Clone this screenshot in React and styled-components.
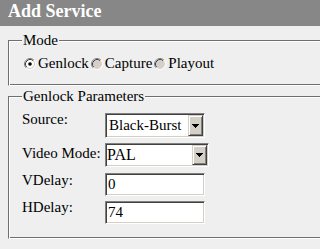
import React from 'react';
import styled, { createGlobalStyle } from 'styled-components';

const GlobalStyle = createGlobalStyle`
  html, body {
    margin: 0;
    padding: 0;
    background: #efefef;
    overflow: hidden;
  }
  body {
    font-family: "Liberation Serif", "Times New Roman", serif;
    font-size: 15px;
    color: #000;
  }
`;

const modes = [
    { name: 'Genlock', checked: true },
    { name: 'Capture', checked: false },
    { name: 'Playout', checked: false },
];

const RadioMark = ({ checked }) => (
    <svg width="12" height="12" viewBox="0 0 12 12">
        <circle cx="6" cy="6" r="4" fill={checked ? '#fff' : '#d4d0c8'} />
        <path d="M2.11 9.89 A5.5 5.5 0 0 1 9.89 2.11" fill="none" stroke="#808080" />
        <path d="M9.89 2.11 A5.5 5.5 0 0 1 2.11 9.89" fill="none" stroke="#fff" />
        <path d="M2.82 9.18 A4.5 4.5 0 0 1 9.18 2.82" fill="none" stroke="#404040" />
        <path d="M9.18 2.82 A4.5 4.5 0 0 1 2.82 9.18" fill="none" stroke="#d4d0c8" />
        {checked && <circle cx="6" cy="6" r="1.8" fill="#000" />}
    </svg>
);

const Arrow = () => (
    <svg width="7" height="4" viewBox="0 0 7 4">
        <path d="M0 0h7v1h-1v1h-1v1h-1v1h-1v-1h-1v-1h-1v-1h-1z" fill="#000" />
    </svg>
);

class App extends React.Component {

    renderRadios() {
        return modes.map((m) => (
            <RadioItem key={m.name}>
                <RadioMark checked={m.checked} />
                <RadioText>{m.name}</RadioText>
            </RadioItem>
        ));
    }

    render() {
        return (
            <>
                <GlobalStyle />
                <Header>Add Service</Header>
                <Main>
                    <Group $top={6} $pt={6} $pb={13}>
                        <Legend $lh={17}>Mode</Legend>
                        <RadioRow>{this.renderRadios()}</RadioRow>
                    </Group>
                    <Group $top={1} $pt={8} $pb={14}>
                        <Legend $lh={18}>Genlock Parameters</Legend>
                        <Row $gap={0}>
                            <Label $dy={-2}>Source:</Label>
                            <SelectBox $w={100} $h={25}>
                                <SelectValue $pl={2} $size={15}>Black-Burst</SelectValue>
                                <DropButton><Arrow /></DropButton>
                            </SelectBox>
                        </Row>
                        <Row $gap={5}>
                            <Label $dy={2}>Video Mode:</Label>
                            <SelectBox $w={104} $h={24}>
                                <SelectValue $pl={0} $size={16}>PAL</SelectValue>
                                <DropButton><Arrow /></DropButton>
                            </SelectBox>
                        </Row>
                        <Row $gap={6}>
                            <Label $dy={-1}>VDelay:</Label>
                            <TextField type="text" defaultValue="0" />
                        </Row>
                        <Row $gap={5}>
                            <Label $dy={-2}>HDelay:</Label>
                            <TextField type="text" defaultValue="74" />
                        </Row>
                    </Group>
                </Main>
            </>
        );
    }
}

const Header = styled.div`
    height: 26px;
    box-sizing: border-box;
    padding-left: 8px;
    background: #878787;
    color: #fff;
    font-weight: bold;
    font-size: 18px;
    line-height: 22px;
`
const Main = styled.div`
    overflow: hidden;
    padding: 0 0 0 8px;
`
const Group = styled.fieldset`
    margin: ${p => p.$top}px -40px 0 0;
    padding: ${p => p.$pt}px 0 ${p => p.$pb}px 13px;
    min-width: 0;
    border: 1px solid;
    border-color: #6f6f6f #fff #fff #6f6f6f;
    box-shadow: inset 1px 1px 0 #fff, inset -1px -1px 0 #6f6f6f;
`
const Legend = styled.legend`
    padding: 0 1px;
    line-height: ${p => p.$lh}px;
    background: #efefef;
`
const RadioRow = styled.div`
    display: flex;
    align-items: center;
    height: 17px;
    line-height: 17px;
    padding-left: 2px;
`
const RadioItem = styled.label`
    display: flex;
    align-items: center;
    margin-right: 2px;
`
const RadioText = styled.span`
    margin-left: 2px;
`
const Row = styled.div`
    display: flex;
    align-items: flex-start;
    margin-top: ${p => p.$gap}px;
`
const Label = styled.div`
    width: 83px;
    flex: none;
    line-height: 17px;
    margin-top: ${p => p.$dy}px;
`
const Bevel = `
    box-sizing: border-box;
    border: 1px solid;
    border-color: #808080 #fff #fff #808080;
    box-shadow: inset 1px 1px 0 #404040, inset -1px -1px 0 #d4d0c8;
    background: #fff;
    padding: 1px;
`
const SelectBox = styled.div`
    ${Bevel};
    display: flex;
    width: ${p => p.$w}px;
    height: ${p => p.$h}px;
`
const SelectValue = styled.div`
    flex: 1;
    padding-left: ${p => p.$pl}px;
    font-size: ${p => p.$size}px;
    line-height: ${p => p.$size === 16 ? 20 : 21}px;
    white-space: nowrap;
    overflow: hidden;
`
const DropButton = styled.div`
    width: 15px;
    flex: none;
    box-sizing: border-box;
    background: #d4d0c8;
    border: 1px solid;
    border-color: #d4d0c8 #404040 #404040 #d4d0c8;
    box-shadow: inset 1px 1px 0 #fff, inset -1px -1px 0 #808080;
    display: flex;
    align-items: center;
    justify-content: center;
`
const TextField = styled.input`
    ${Bevel};
    width: 100px;
    height: 23px;
    padding: 1px 1px 1px 2px;
    margin: 0;
    font-family: "Liberation Serif", "Times New Roman", serif;
    font-size: 15px;
    color: #000;
    outline: none;
`

export default App;
